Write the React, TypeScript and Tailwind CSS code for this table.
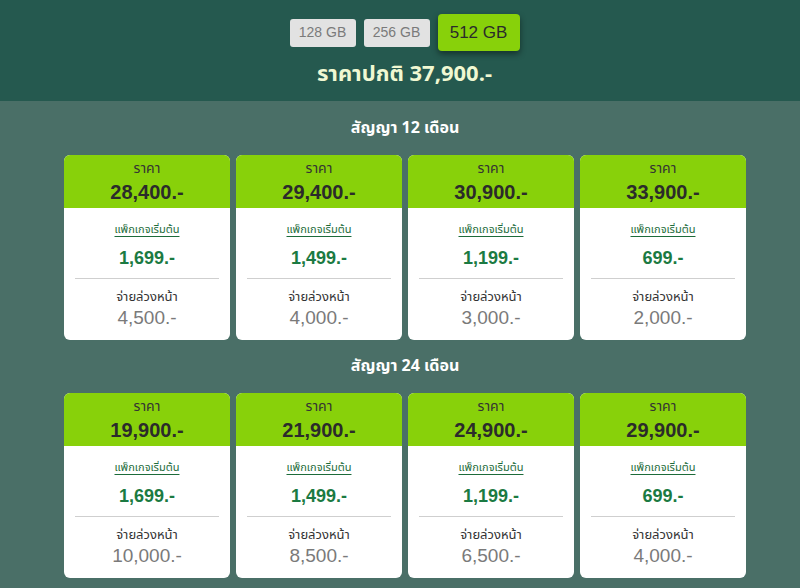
import React from "react";

type Card = { price: string; pkg: string; down: string };

const rows: { title: string; cards: Card[] }[] = [
  {
    title: "สัญญา 12 เดือน",
    cards: [
      { price: "28,400.-", pkg: "1,699.-", down: "4,500.-" },
      { price: "29,400.-", pkg: "1,499.-", down: "4,000.-" },
      { price: "30,900.-", pkg: "1,199.-", down: "3,000.-" },
      { price: "33,900.-", pkg: "699.-", down: "2,000.-" },
    ],
  },
  {
    title: "สัญญา 24 เดือน",
    cards: [
      { price: "19,900.-", pkg: "1,699.-", down: "10,000.-" },
      { price: "21,900.-", pkg: "1,499.-", down: "8,500.-" },
      { price: "24,900.-", pkg: "1,199.-", down: "6,500.-" },
      { price: "29,900.-", pkg: "699.-", down: "4,000.-" },
    ],
  },
];

const font = { fontFamily: '"Noto Sans Thai", "Noto Sans", "Liberation Sans", sans-serif' };
const num = { fontFamily: '"Liberation Sans", Arial, sans-serif' };

function PriceCard({ c }: { c: Card }) {
  return (
    <div className="w-[166px] h-[185px] rounded-[6px] overflow-hidden bg-white flex flex-col">
      <div className="h-[53px] bg-[#88d10a] flex flex-col items-center pt-[6px]">
        <div className="text-[14px] leading-[16px] text-[#333]">ราคา</div>
        <div className="mt-[3px] text-[20px] leading-[24px] font-bold text-[#2b2b2b]" style={num}>{c.price}</div>
      </div>
      <div className="flex flex-col items-center pt-[14px]">
        <div className="text-[11px] leading-[16px] text-[#1d6b3a] underline underline-offset-[3px]">แพ็กเกจเริ่มต้น</div>
        <div className="mt-[9px] text-[18px] leading-[22px] font-bold text-[#1b7a42]" style={num}>{c.pkg}</div>
        <div className="mt-[9px] w-[144px] h-px bg-[#cfcfcf]" />
        <div className="mt-[10px] text-[13px] leading-[16px] text-[#333]">จ่ายล่วงหน้า</div>
        <div className="mt-[2px] text-[19px] leading-[22px] text-[#7a7a7a]" style={num}>{c.down}</div>
      </div>
    </div>
  );
}

export default function App() {
  return (
    <div className="w-[800px] h-[588px] overflow-hidden bg-[#4a6f67]" style={font}>
      <div className="h-[101px] bg-[#25594f] flex flex-col items-center">
        <div className="flex items-center gap-[8px] mt-[14px] h-[37px] ml-[9px]" style={num}>
          <div className="w-[66px] h-[28px] rounded-[3px] bg-[#e2e2e2] text-[#7a7a7a] text-[14px] flex items-center justify-center">128 GB</div>
          <div className="w-[66px] h-[28px] rounded-[3px] bg-[#e2e2e2] text-[#7a7a7a] text-[14px] flex items-center justify-center">256 GB</div>
          <div className="w-[82px] h-[37px] rounded-[4px] bg-[#88d10a] text-[#2b2b2b] text-[17px] flex items-center justify-center shadow-[0_3px_6px_rgba(0,0,0,0.45)]">512 GB</div>
        </div>
        <div className="mt-[9px] ml-[9px] text-[22px] leading-[30px] font-bold text-[#f0f8d2]">ราคาปกติ 37,900.-</div>
      </div>
      <div className="pl-[64px]">
        {rows.map((r, i) => (
          <div key={i} className={i === 0 ? "pt-[15px]" : "pt-[14px]"}>
            <div className="w-[682px] text-center text-[16px] leading-[24px] font-bold text-white">{r.title}</div>
            <div className="mt-[15px] flex gap-[6px]">
              {r.cards.map((c, j) => (
                <PriceCard key={j} c={c} />
              ))}
            </div>
          </div>
        ))}
      </div>
    </div>
  );
}
